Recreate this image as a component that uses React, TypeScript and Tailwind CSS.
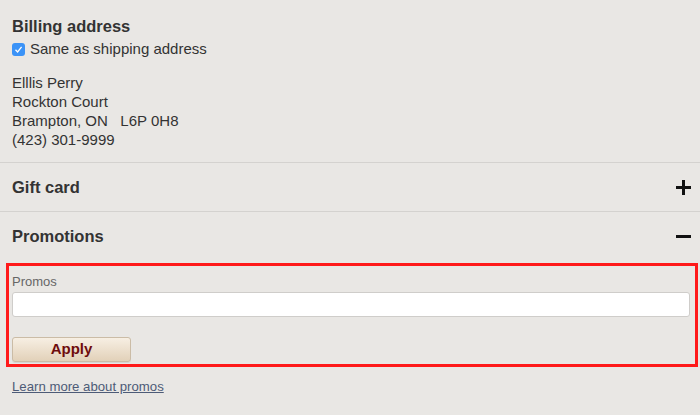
import React from "react";

export default function App() {
  return (
    <div
      className="w-[700px] h-[415px] overflow-hidden bg-[#e9e7e4] text-[#333]"
      style={{ fontFamily: '"Liberation Sans", Arial, sans-serif' }}
    >
      <div className="pl-3 pt-[16px] pb-[13px]">
        <div className="text-[16.5px] leading-[20px] font-bold text-[#333]">Billing address</div>
        <label className="mt-[3px] flex items-center gap-[5px] text-[15px] leading-[20px]">
          <span className="flex h-[13px] w-[13px] items-center justify-center rounded-[3px] bg-[#3b93f7]">
            <svg width="9" height="9" viewBox="0 0 9 9">
              <path d="M1.5 4.8 L3.6 7 L7.6 1.8" fill="none" stroke="white" strokeWidth="1.3" />
            </svg>
          </span>
          <span>Same as shipping address</span>
        </label>
        <div className="mt-[14px] text-[15px] leading-[19px]">
          <div>Elllis Perry</div>
          <div>Rockton Court</div>
          <div className="whitespace-pre">Brampton, ON   L6P 0H8</div>
          <div>(423) 301-9999</div>
        </div>
      </div>
      <div className="flex h-[49px] items-center justify-between border-t border-[#d4d2cf] pl-3 pr-[9px]">
        <span className="text-[16.5px] font-bold">Gift card</span>
        <span className="relative block h-[15px] w-[15px]">
          <span className="absolute left-0 top-[6px] h-[3px] w-[15px] bg-[#111]" />
          <span className="absolute left-[6px] top-0 h-[15px] w-[3px] bg-[#111]" />
        </span>
      </div>
      <div className="flex h-[50px] items-center justify-between border-t border-[#d4d2cf] pl-3 pr-[9px]">
        <span className="text-[16.5px] font-bold">Promotions</span>
        <span className="block h-[3px] w-[15px] bg-[#111]" />
      </div>
      <div className="ml-[6px] mr-[2px] mt-[2px] border-[3px] border-[#ff1a1a] pl-[3px] pr-[5px] pt-[8px] pb-[2px]">
        <div className="text-[13px] leading-[15px] text-[#666]">Promos</div>
        <input
          className="mt-[3px] block h-[25px] w-full rounded-[3px] border border-[#cfcdca] bg-white outline-none"
          type="text"
        />
        <button className="mt-[20px] flex h-[25px] w-[119px] items-center justify-center rounded-[3px] border border-[#cbbca6] bg-gradient-to-b from-[#f7efe3] to-[#e2d1b9] text-[15px] font-bold text-[#6e0c0c] shadow-[0_1px_0_rgba(0,0,0,0.08)]">
          Apply
        </button>
      </div>
      <div className="mt-[12px] pl-3 text-[13.2px] leading-[16px]">
        <a className="text-[#4d5b77] underline" href="#">
          Learn more about promos
        </a>
      </div>
    </div>
  );
}
